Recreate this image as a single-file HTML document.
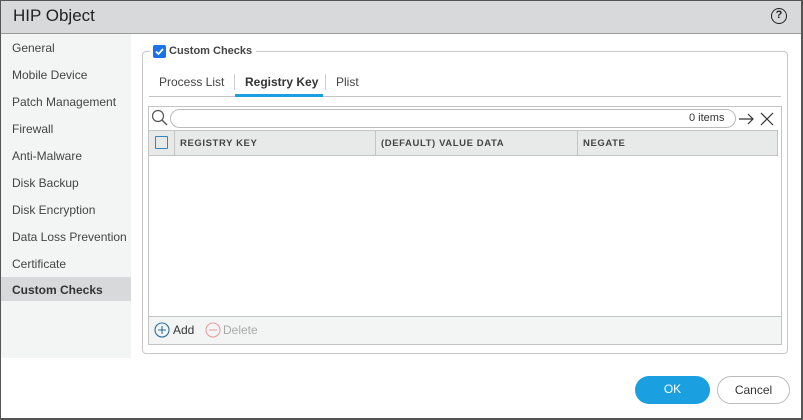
<!DOCTYPE html>
<html><head><meta charset="utf-8"><style>
*{box-sizing:border-box;margin:0;padding:0}
body{width:803px;height:420px;overflow:hidden;background:#fff;font-family:"Liberation Sans",sans-serif;color:#333;position:relative}
.a{position:absolute}
.frame{left:0;top:0;width:803px;height:420px;border:1px solid #555;border-right:2px solid #555;border-bottom:2px solid #555}
.hdr{left:1px;top:1px;width:800px;height:33px;background:#d8d9da;border-bottom:1px solid #9a9a9a}
.side{left:1px;top:34px;width:130px;height:324px;background:#f3f4f4}
.si{position:absolute;left:12px;font-size:12px;color:#444}
.sel{left:1px;top:277px;width:130px;height:24px;background:#d8d9da}
.fs{left:142px;top:51px;width:646px;height:303px;border:1px solid #c8c8c8;border-radius:4px}
.tab{font-size:12px;color:#444}
.grid{left:148px;top:106px;width:634px;height:239px;border:1px solid #c4c4c4}
.th{font-size:9.5px;font-weight:bold;letter-spacing:0.6px;color:#444}
.btn{border-radius:14px;font-size:12px;text-align:center;line-height:27px}
</style></head><body>
<div class="a frame"></div>
<div class="a hdr"></div>
<div class="a" style="left:13px;top:6px;font-size:17px;color:#222">HIP Object</div>
<div class="a" style="left:771px;top:8px;width:16px;height:16px;border:1.5px solid #222;border-radius:50%;font-size:11px;font-weight:bold;text-align:center;line-height:13px;color:#222">?</div>
<div class="a side"></div>
<div class="a sel"></div>
<div class="si" style="top:41px">General</div>
<div class="si" style="top:68px">Mobile Device</div>
<div class="si" style="top:95px">Patch Management</div>
<div class="si" style="top:122px">Firewall</div>
<div class="si" style="top:149px">Anti-Malware</div>
<div class="si" style="top:176px">Disk Backup</div>
<div class="si" style="top:203px">Disk Encryption</div>
<div class="si" style="top:230px">Data Loss Prevention</div>
<div class="si" style="top:257px">Certificate</div>
<div class="si" style="top:283px;font-weight:bold;color:#333">Custom Checks</div>
<div class="a fs"></div>
<div class="a" style="left:150px;top:44px;width:106px;height:14px;background:#fff"></div>
<div class="a" style="left:153px;top:45px;width:13px;height:13px;background:#1a73e8;border-radius:2px"><svg width="13" height="13"><path d="M3 6.5l2.5 2.5 4.5-5" stroke="#fff" stroke-width="1.8" fill="none"/></svg></div>
<div class="a" style="left:169px;top:45px;font-size:11px;font-weight:bold;color:#444">Custom Checks</div>
<div class="a tab" style="left:159px;top:75px">Process List</div>
<div class="a" style="left:234px;top:74px;width:1px;height:16px;background:#ccc"></div>
<div class="a tab" style="left:245px;top:75px;font-weight:bold;color:#333">Registry Key</div>
<div class="a" style="left:325px;top:74px;width:1px;height:16px;background:#ccc"></div>
<div class="a tab" style="left:336px;top:75px">Plist</div>
<div class="a" style="left:149px;top:96px;width:632px;height:1px;background:#c4c4c4"></div>
<div class="a" style="left:235px;top:94px;width:88px;height:3px;background:#1a9fe0"></div>
<div class="a grid"></div>
<svg class="a" style="left:151px;top:109px" width="18" height="18"><circle cx="7" cy="7" r="5.5" stroke="#555" stroke-width="1.2" fill="none"/><path d="M11 11l5 5" stroke="#555" stroke-width="1.4"/></svg>
<div class="a" style="left:170px;top:109px;width:566px;height:19px;border:1px solid #bbb;border-radius:10px"></div>
<div class="a" style="left:689px;top:112px;font-size:11px;color:#333">0 items</div>
<svg class="a" style="left:738px;top:111px" width="44" height="16"><path d="M1 8h14M10 3l5 5-5 5" stroke="#333" stroke-width="1.2" fill="none"/><path d="M23 2l12 12M35 2l-12 12" stroke="#333" stroke-width="1.2"/></svg>
<div class="a" style="left:149px;top:130px;width:629px;height:26px;background:#e8e9e9;border-top:1px solid #c4c4c4;border-bottom:1px solid #c4c4c4"></div>
<div class="a" style="left:777px;top:130px;width:1px;height:26px;background:#c4c4c4"></div>
<div class="a" style="left:155px;top:136px;width:13px;height:13px;border:1.5px solid #2f86c0;border-radius:1px"></div>
<div class="a" style="left:174px;top:131px;width:1px;height:24px;background:#c4c4c4"></div>
<div class="a" style="left:375px;top:131px;width:1px;height:24px;background:#c4c4c4"></div>
<div class="a" style="left:577px;top:131px;width:1px;height:24px;background:#c4c4c4"></div>
<div class="a th" style="left:180px;top:138px">REGISTRY KEY</div>
<div class="a th" style="left:381px;top:138px">(DEFAULT) VALUE DATA</div>
<div class="a th" style="left:583px;top:138px">NEGATE</div>
<div class="a" style="left:149px;top:316px;width:632px;height:28px;background:#f3f4f4;border-top:1px solid #c4c4c4"></div>
<svg class="a" style="left:154px;top:322px" width="16" height="16"><circle cx="8" cy="8" r="7" stroke="#2a6f9a" stroke-width="1.1" fill="none"/><path d="M8 4v8M4 8h8" stroke="#2a6f9a" stroke-width="1.1"/></svg>
<div class="a" style="left:173px;top:323px;font-size:12px;color:#333">Add</div>
<svg class="a" style="left:205px;top:322px" width="16" height="16"><circle cx="8" cy="8" r="7" stroke="#e8a0a0" stroke-width="1.1" fill="none"/><path d="M4 8h8" stroke="#e8a0a0" stroke-width="1.1"/></svg>
<div class="a" style="left:223px;top:323px;font-size:12px;color:#aaa">Delete</div>
<div class="a btn" style="left:635px;top:376px;width:75px;height:28px;background:#1a9fe0;color:#fff">OK</div>
<div class="a btn" style="left:717px;top:376px;width:73px;height:28px;border:1px solid #bbb;color:#333;line-height:26px">Cancel</div>
</body></html>
